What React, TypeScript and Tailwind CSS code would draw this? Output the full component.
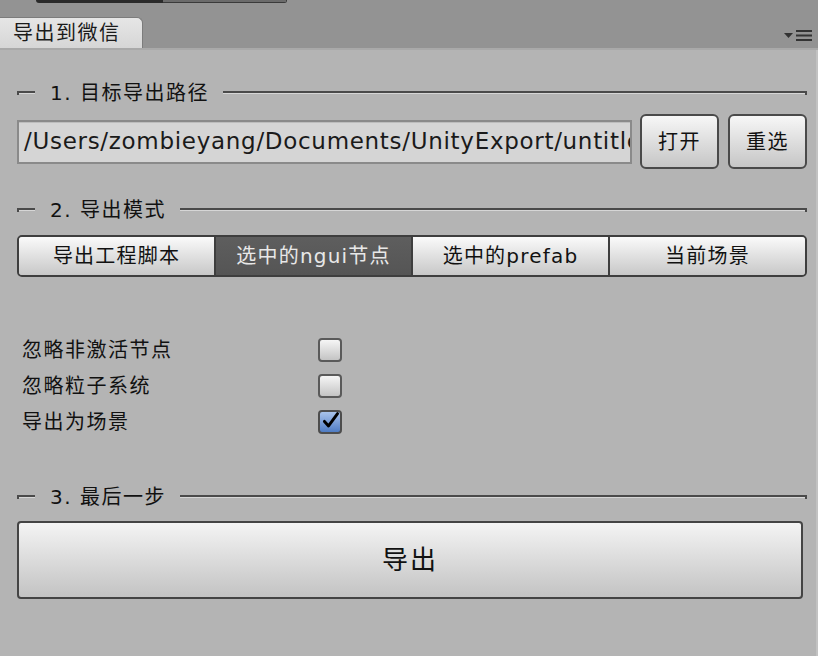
import { useState } from 'react';

const font = 'font-["DejaVu_Sans","Noto_Sans_CJK_SC",sans-serif]';

const SectionHeader = ({ title }: { title: string }) => (
  <div className="flex items-center h-[24px]">
    <div className="w-[18px] h-[4px] border-t-2 border-l-2 border-[#4a4a4a] shadow-[inset_0_1px_0_#d6d6d6]" />
    <span className="ml-[15px] text-[20px] tracking-[1.5px] text-[#111] leading-none">{title}</span>
    <div className="ml-[14px] flex-1 h-[4px] border-t-2 border-r-2 border-[#4a4a4a] shadow-[inset_0_1px_0_#d6d6d6]" />
  </div>
);

const Checkbox = ({ checked, onClick }: { checked: boolean; onClick: () => void }) => (
  <button
    onClick={onClick}
    className={
      checked
        ? 'w-[24px] h-[24px] rounded-[4px] border-2 border-[#4d4d4d] bg-gradient-to-b from-[#a9c3ea] to-[#4f7cc4] flex items-center justify-center'
        : 'w-[24px] h-[24px] rounded-[4px] border-2 border-[#5a5a5a] bg-gradient-to-b from-[#f6f6f6] to-[#c4c4c4]'
    }
  >
    {checked && (
      <svg width="22" height="22" viewBox="0 0 22 22" className="-mt-[3px] ml-[2px]">
        <path d="M3 11.5 L8 17 L19 2" fill="none" stroke="#000" strokeWidth="3.6" strokeLinecap="round" strokeLinejoin="round" />
      </svg>
    )}
  </button>
);

const modes = ['导出工程脚本', '选中的ngui节点', '选中的prefab', '当前场景'];

const App = () => {
  const [mode, setMode] = useState(1);
  const [opts, setOpts] = useState([false, false, true]);
  const labels = ['忽略非激活节点', '忽略粒子系统', '导出为场景'];

  const toggle = (i: number) => setOpts(opts.map((v, j) => (j === i ? !v : v)));

  return (
    <div className={`w-[818px] h-[656px] bg-[#b4b4b4] flex flex-col overflow-hidden ${font}`}>
      {/* Top tab strip */}
      <div className="relative h-[48px] bg-[#939393] flex items-end">
        <div className="absolute top-0 left-[36px] w-[251px] h-[3px] flex rounded-b-[3px] overflow-hidden">
          <div className="w-[127px] bg-[#2a2a2a]" />
          <div className="flex-1 bg-[#6b6b6b] border-b border-r border-[#3a3a3a]" />
        </div>
        <div className="w-[143px] h-[31px] rounded-tr-[6px] border-t border-r border-[#7c7c7c] bg-gradient-to-b from-[#e6e6e6] to-[#d6d6d6] flex items-center pl-[13px]">
          <span className="text-[20px] tracking-[1.5px] text-[#1a1a1a] leading-none">导出到微信</span>
        </div>
        <div className="ml-auto mr-[6px] mb-[7px] flex items-center gap-[3px]">
          <svg width="9" height="6" viewBox="0 0 9 6">
            <path d="M0 0 H9 L4.5 5 Z" fill="#333" />
          </svg>
          <svg width="16" height="11" viewBox="0 0 16 11">
            <rect x="0" y="0" width="16" height="2" fill="#333" />
            <rect x="0" y="4.5" width="16" height="2" fill="#333" />
            <rect x="0" y="9" width="16" height="2" fill="#333" />
          </svg>
        </div>
      </div>
      <div className="h-[2px] bg-[#a9a9a9]" />

      <div className="flex-1 flex flex-col pl-[17px] pr-[9px] border-r-2 border-[#c2c2c2]">
        <div className="mt-[31px]">
          <SectionHeader title="1. 目标导出路径" />
        </div>

        <div className="mt-[9px] flex items-center h-[55px]">
          <div className="flex-1 h-[44px] border-2 border-[#8a8a8a] bg-[#d5d5d5] shadow-[inset_0_1px_0_#bdbdbd] flex items-center pl-[5px] overflow-hidden whitespace-nowrap">
            <span className='text-[23px] text-[#1a1a1a] font-["DejaVu_Sans",sans-serif] tracking-[0.7px]'>
              /Users/zombieyang/Documents/UnityExport/untitled
            </span>
          </div>
          <button className="ml-[8px] w-[79px] h-[55px] rounded-[6px] border-2 border-[#4a4a4a] bg-gradient-to-b from-[#f7f7f7] to-[#c6c6c6] text-[20px] tracking-[1.5px] text-[#111]">
            打开
          </button>
          <button className="ml-[9px] w-[79px] h-[55px] rounded-[6px] border-2 border-[#4a4a4a] bg-gradient-to-b from-[#f7f7f7] to-[#c6c6c6] text-[20px] tracking-[1.5px] text-[#111]">
            重选
          </button>
        </div>

        <div className="mt-[29px]">
          <SectionHeader title="2. 导出模式" />
        </div>

        <div className="mt-[13px] h-[42px] flex rounded-[5px] border-2 border-[#3e3e3e] overflow-hidden">
          {modes.map((m, i) => (
            <button
              key={m}
              onClick={() => setMode(i)}
              className={
                (i > 0 ? 'border-l-2 border-[#3e3e3e] ' : '') +
                (mode === i
                  ? 'flex-1 bg-gradient-to-b from-[#5e5e5e] to-[#555555] text-[#e8e8e8] text-[20px] tracking-[1.2px]'
                  : 'flex-1 bg-gradient-to-b from-[#fafafa] to-[#c8c8c8] text-[#111] text-[20px] tracking-[1.2px]')
              }
            >
              {m}
            </button>
          ))}
        </div>

        <div className="mt-[55px] flex flex-col">
          {labels.map((l, i) => (
            <div key={l} className="h-[36px] flex items-center">
              <span className="w-[301px] pl-[5px] text-[20px] tracking-[1.5px] text-[#111]">{l}</span>
              <Checkbox checked={opts[i]} onClick={() => toggle(i)} />
            </div>
          ))}
        </div>

        <div className="mt-[45px]">
          <SectionHeader title="3. 最后一步" />
        </div>

        <button className="mt-[12px] mr-[4px] h-[78px] rounded-[4px] border-2 border-[#444] bg-gradient-to-b from-[#f4f4f4] to-[#c3c3c3] text-[26px] tracking-[2px] text-[#111]">
          导出
        </button>
      </div>
    </div>
  );
};

export default App;
